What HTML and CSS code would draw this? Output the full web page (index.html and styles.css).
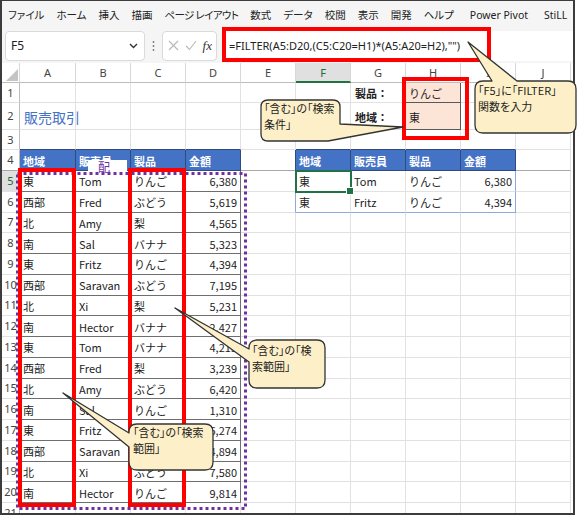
FILE: index.html
```html
<!DOCTYPE html>
<html lang="ja">

<head>
    <meta charset="UTF-8">
    <title>FILTER関数</title>
    <link rel="stylesheet" href="styles.css">
</head>

<body>
    <div class="window">
        <div class="menubar">
            <span>ファイル</span>
            <span>ホーム</span>
            <span>挿入</span>
            <span>描画</span>
            <span class="tight">ページ レイアウト</span>
            <span>数式</span>
            <span>データ</span>
            <span>校閲</span>
            <span>表示</span>
            <span>開発</span>
            <span>ヘルプ</span>
            <span class="latin">Power Pivot</span>
            <span class="latin">StiLL</span>
        </div>
        <div class="formulabar">
            <div class="namebox">
                <span>F5</span>
                <svg width="9" height="6" viewBox="0 0 9 6"><polyline points="1,1 4.5,4.5 8,1" fill="none" stroke="#333" stroke-width="1.4"/></svg>
            </div>
            <div class="grip">
                <svg width="3" height="12" viewBox="0 0 3 12"><circle cx="1.5" cy="2" r="0.9" fill="#777"/><circle cx="1.5" cy="6" r="0.9" fill="#777"/><circle cx="1.5" cy="10" r="0.9" fill="#777"/></svg>
            </div>
            <div class="fxbox">
                <svg width="11" height="11" viewBox="0 0 11 11"><path d="M1 1 L10 10 M10 1 L1 10" stroke="#b8b8b8" stroke-width="1.1"/></svg>
                <svg width="12" height="11" viewBox="0 0 12 11"><path d="M1 6 L4.5 9.5 L11 1" fill="none" stroke="#b8b8b8" stroke-width="1.1"/></svg>
                <span class="fx">fx</span>
            </div>
            <div class="formula">=FILTER(A5:D20,(C5:C20=H1)*(A5:A20=H2),"")</div>
        </div>

        <div class="sheetwrap">
            <table class="sheet">
                <colgroup>
                    <col class="c-rh"><col class="c-a"><col><col><col><col><col><col><col><col><col>
                </colgroup>
                <tr class="hdr">
                    <td class="corner"><svg width="12" height="12" viewBox="0 0 12 12"><polygon points="12,0 12,12 0,12" fill="#c4c4c4"/></svg></td>
                    <td>A</td><td>B</td><td>C</td><td>D</td><td>E</td><td class="csel">F</td><td>G</td><td>H</td><td>I</td><td>J</td>
                </tr>
                <tr class="row">
                    <td class="rh">1</td><td></td><td></td><td></td><td></td><td></td><td></td><td class="lbl">製品：</td><td class="crit">りんご</td><td></td><td></td>
                </tr>
                <tr class="row tall">
                    <td class="rh">2</td><td class="title">販売取引</td><td></td><td></td><td></td><td></td><td></td><td class="lbl">地域：</td><td class="crit">東</td><td></td><td></td>
                </tr>
                <tr class="row">
                    <td class="rh">3</td><td class="up"></td><td class="up"></td><td class="up"></td><td class="up"></td><td></td><td class="up"></td><td class="up"></td><td class="up"></td><td class="up"></td><td></td>
                </tr>
                <tr class="row r4">
                    <td class="rh fz">4</td><td class="th">地域</td><td class="th">販売員</td><td class="th">製品</td><td class="th">金額</td><td class="fz en"></td><td class="th">地域</td><td class="th">販売員</td><td class="th">製品</td><td class="th">金額</td><td class="fz"></td>
                </tr>
                <tr class="row dr">
                    <td class="rh rsel">5</td><td class="d">東</td><td class="d">Tom</td><td class="d">りんご</td><td class="d n">6,380</td><td class="eb"></td><td class="r">東</td><td class="r">Tom</td><td class="r">りんご</td><td class="r n re">6,380</td><td></td>
                </tr>
                <tr class="row dr">
                    <td class="rh">6</td><td class="d">西部</td><td class="d">Fred</td><td class="d">ぶどう</td><td class="d n">5,619</td><td class="eb"></td><td class="r rl">東</td><td class="r rl">Fritz</td><td class="r rl">りんご</td><td class="r rl n re">4,394</td><td></td>
                </tr>
                <tr class="row dr">
                    <td class="rh">7</td><td class="d">北</td><td class="d">Amy</td><td class="d">梨</td><td class="d n">4,565</td><td></td><td></td><td></td><td></td><td></td><td></td>
                </tr>
                <tr class="row dr">
                    <td class="rh">8</td><td class="d">南</td><td class="d">Sal</td><td class="d">バナナ</td><td class="d n">5,323</td><td></td><td></td><td></td><td></td><td></td><td></td>
                </tr>
                <tr class="row dr">
                    <td class="rh">9</td><td class="d">東</td><td class="d">Fritz</td><td class="d">りんご</td><td class="d n">4,394</td><td></td><td></td><td></td><td></td><td></td><td></td>
                </tr>
                <tr class="row dr">
                    <td class="rh">10</td><td class="d">西部</td><td class="d">Saravan</td><td class="d">ぶどう</td><td class="d n">7,195</td><td></td><td></td><td></td><td></td><td></td><td></td>
                </tr>
                <tr class="row dr">
                    <td class="rh">11</td><td class="d">北</td><td class="d">Xi</td><td class="d">梨</td><td class="d n">5,231</td><td></td><td></td><td></td><td></td><td></td><td></td>
                </tr>
                <tr class="row dr">
                    <td class="rh">12</td><td class="d">南</td><td class="d">Hector</td><td class="d">バナナ</td><td class="d n">2,427</td><td></td><td></td><td></td><td></td><td></td><td></td>
                </tr>
                <tr class="row dr">
                    <td class="rh">13</td><td class="d">東</td><td class="d">Tom</td><td class="d">バナナ</td><td class="d n">4,213</td><td></td><td></td><td></td><td></td><td></td><td></td>
                </tr>
                <tr class="row dr">
                    <td class="rh">14</td><td class="d">西部</td><td class="d">Fred</td><td class="d">梨</td><td class="d n">3,239</td><td></td><td></td><td></td><td></td><td></td><td></td>
                </tr>
                <tr class="row dr">
                    <td class="rh">15</td><td class="d">北</td><td class="d">Amy</td><td class="d">ぶどう</td><td class="d n">6,420</td><td></td><td></td><td></td><td></td><td></td><td></td>
                </tr>
                <tr class="row dr">
                    <td class="rh">16</td><td class="d">南</td><td class="d">Sal</td><td class="d">りんご</td><td class="d n">1,310</td><td></td><td></td><td></td><td></td><td></td><td></td>
                </tr>
                <tr class="row dr">
                    <td class="rh">17</td><td class="d">東</td><td class="d">Fritz</td><td class="d">梨</td><td class="d n">6,274</td><td></td><td></td><td></td><td></td><td></td><td></td>
                </tr>
                <tr class="row dr">
                    <td class="rh">18</td><td class="d">西部</td><td class="d">Saravan</td><td class="d">バナナ</td><td class="d n">4,894</td><td></td><td></td><td></td><td></td><td></td><td></td>
                </tr>
                <tr class="row dr">
                    <td class="rh">19</td><td class="d">北</td><td class="d">Xi</td><td class="d">ぶどう</td><td class="d n">7,580</td><td></td><td></td><td></td><td></td><td></td><td></td>
                </tr>
                <tr class="row dr">
                    <td class="rh">20</td><td class="d">南</td><td class="d">Hector</td><td class="d">りんご</td><td class="d n">9,814</td><td></td><td></td><td></td><td></td><td></td><td></td>
                </tr>
                <tr class="row">
                    <td class="rh">21</td><td></td><td></td><td></td><td></td><td></td><td></td><td></td><td></td><td></td><td></td>
                </tr>
            </table>
        </div>
    </div>

    <!-- annotations drawn over the sheet -->
    <div class="selcell"></div>
    <div class="spilltag">配</div>

    <svg class="marks" width="578" height="515" viewBox="0 0 578 515">
        <rect class="dots" x="17.5" y="173.5" width="228" height="335"/>
        <rect class="red" x="224" y="29" width="265" height="31"/>
        <rect class="red" x="404" y="79" width="63" height="59"/>
        <rect class="red" x="20" y="170" width="54" height="335"/>
        <rect class="red" x="130" y="170" width="54" height="335"/>

        <path class="bubble" d="M483,81 L492,81 L468,42 L517,81 L568,81 Q576,81 576,89 L576,125 Q576,133 568,133 L483,133 Q475,133 475,125 L475,89 Q475,81 483,81 Z"/>
        <path class="bubble" d="M268,100 L333,100 Q340,100 340,107 L340,124 L403,127 L328,141 L268,141 Q261,141 261,134 L261,107 Q261,100 268,100 Z"/>
        <path class="bubble" d="M257,340 L317,340 Q325,340 325,348 L325,380 Q325,388 317,388 L257,388 Q249,388 249,380 L249,362 L175,308 L249,349 L249,348 Q249,340 257,340 Z"/>
        <path class="bubble" d="M137,424 L205,424 Q213,424 213,432 L213,462 Q213,470 205,470 L137,470 Q129,470 129,462 L129,447 L63,393 L129,433 L129,432 Q129,424 137,424 Z"/>
    </svg>

    <div class="note n1">「F5」に「FILTER」<br>関数を入力</div>
    <div class="note n2">「含む」の「検索<br>条件」</div>
    <div class="note n3">「含む」の「検<br>索範囲」</div>
    <div class="note n4">「含む」の「検索<br>範囲」</div>
</body>

</html>
```

FILE: styles.css
```css
* {
    margin: 0;
    padding: 0;
    box-sizing: border-box;
}

body {
    width: 578px;
    height: 515px;
    position: relative;
    overflow: hidden;
    background-color: #fff;
    color: #222;
    font-family: "Noto Sans CJK JP", sans-serif;
}

.window {
    width: 575px;
    height: 515px;
    border: 2px solid #3c3c3c;
    border-top-width: 1px;
    display: flex;
    flex-direction: column;
    overflow: hidden;
    background-color: #fff;
}

/* ribbon tabs */
.menubar {
    height: 27px;
    flex-shrink: 0;
    background-color: #f5f5f5;
    display: flex;
    align-items: center;
    gap: 12px;
    padding-left: 6px;
    font-size: 10.5px;
    font-feature-settings: "palt";
    white-space: nowrap;
}

.menubar .tight {
    letter-spacing: -0.6px;
}

.menubar .latin {
    font-family: "Noto Sans", sans-serif;
    font-size: 10.5px;
    margin-left: 4px;
}

/* name box + formula */
.formulabar {
    height: 35px;
    flex-shrink: 0;
    background-color: #f5f5f5;
    display: flex;
    align-items: center;
    padding-left: 3px;
}

.namebox {
    width: 140px;
    height: 30px;
    background-color: #fff;
    border: 1px solid #dadada;
    border-radius: 4px;
    display: flex;
    align-items: center;
    justify-content: space-between;
    padding: 0 6px 0 5px;
    font: 12px "Noto Sans", sans-serif;
}

.grip {
    width: 17px;
    display: flex;
    justify-content: center;
}

.fxbox {
    width: 55px;
    height: 30px;
    background-color: #fff;
    border: 1px solid #dadada;
    border-radius: 4px;
    display: flex;
    align-items: center;
    justify-content: space-between;
    padding: 0 4px 0 5px;
}

.fx {
    font: italic 13px "Liberation Serif", serif;
    color: #333;
}

.formula {
    flex: 1;
    height: 30px;
    margin-left: 5px;
    background-color: #fff;
    display: flex;
    align-items: center;
    padding-left: 7px;
    font: 11px "Noto Sans", sans-serif;
    white-space: nowrap;
}

/* grid */
.sheetwrap {
    flex: 1;
    overflow: hidden;
}

.sheet {
    border-collapse: separate;
    border-spacing: 0;
    table-layout: fixed;
    width: 569px;
    font-size: 11px;
}

.sheet col {
    width: 55px;
}

.sheet col.c-rh {
    width: 18px;
}

.sheet col.c-a {
    width: 56px;
}

.sheet td {
    padding: 1px 3px 0;
    border-right: 1px solid #e1e1e1;
    border-bottom: 1px solid #e1e1e1;
    white-space: nowrap;
    overflow: hidden;
    vertical-align: middle;
    line-height: 14px;
}

.hdr {
    height: 20px;
}

.hdr td {
    text-align: center;
    color: #444;
    background-color: #fff;
    border-right-color: #d8d8d8;
    border-bottom-color: #bdbdbd;
    font-family: "Noto Sans", sans-serif;
    font-size: 11px;
}

.hdr td.corner {
    padding: 0 1px 1px 0;
    text-align: right;
    vertical-align: bottom;
    line-height: 0;
}

.hdr td.csel {
    background-color: #e0e0e0;
    color: #1e6b41;
    border-bottom: 2px solid #217346;
}

.row {
    height: 20px;
}

.row.tall {
    height: 27px;
}

.row.r4 {
    height: 21px;
}

.row.dr {
    height: 20.75px;
}

.sheet td.rh {
    padding: 0;
    text-align: center;
    color: #444;
    border-right-color: #bdbdbd;
    font-family: "Noto Sans", sans-serif;
    font-size: 11px;
    overflow: visible;
}

.sheet td.rsel {
    background-color: #e0e0e0;
    color: #1e6b41;
}

.sheet td.title {
    overflow: visible;
    font-size: 14px;
    color: #4472c4;
    padding-left: 4px;
}

.sheet td.lbl {
    font-weight: bold;
    padding-left: 4px;
    border-right-color: #595959;
}

.sheet td.crit {
    background-color: #fce4d6;
    border-right-color: #595959;
    border-bottom-color: #595959;
}

.sheet td.up {
    border-bottom-color: #2f4b7c;
}

/* sales table */
.sheet td.th {
    background-color: #4472c4;
    color: #fff;
    font-weight: bold;
    border-right-color: #2f4b7c;
    border-bottom-color: #2f4b7c;
}

.sheet td.fz {
    border-bottom-color: #a8a8a8;
}

.sheet td.en {
    border-right-color: #2f4b7c;
}

.sheet td.d {
    border-right-color: #6e6e6e;
    border-bottom-color: #6e6e6e;
}

.sheet td.n {
    text-align: right;
}

/* FILTER result */
.sheet td.eb {
    border-right-color: #8eaadb;
}

.sheet td.rl {
    border-bottom-color: #8eaadb;
}

.sheet td.re {
    border-right-color: #8eaadb;
}

/* overlays */
.selcell {
    position: absolute;
    left: 295px;
    top: 170px;
    width: 57px;
    height: 23px;
    border: 2px solid #217346;
}

.selcell::after {
    content: "";
    position: absolute;
    right: -4px;
    bottom: -4px;
    width: 6px;
    height: 6px;
    background-color: #217346;
    border: 1px solid #fff;
}

.spilltag {
    position: absolute;
    left: 88px;
    top: 160px;
    width: 39px;
    height: 13px;
    background-color: #fff;
    color: #7030a0;
    font-size: 12px;
    line-height: 13px;
    padding-left: 10px;
}

.marks {
    position: absolute;
    left: 0;
    top: 0;
}

.marks .red {
    fill: none;
    stroke: #ff0000;
    stroke-width: 4;
}

.marks .dots {
    fill: none;
    stroke: #7030a0;
    stroke-width: 3;
    stroke-dasharray: 3 3;
}

.marks .bubble {
    fill: #fdf0c8;
    stroke: #333;
    stroke-width: 1.3;
    stroke-linejoin: round;
}

.note {
    position: absolute;
    font-size: 11px;
    font-feature-settings: "palt";
    line-height: 16px;
    color: #222;
    white-space: nowrap;
}

.n1 {
    left: 478px;
    top: 82px;
}

.n2 {
    left: 264px;
    top: 100px;
}

.n3 {
    left: 252px;
    top: 342px;
}

.n4 {
    left: 133px;
    top: 424px;
}
```
